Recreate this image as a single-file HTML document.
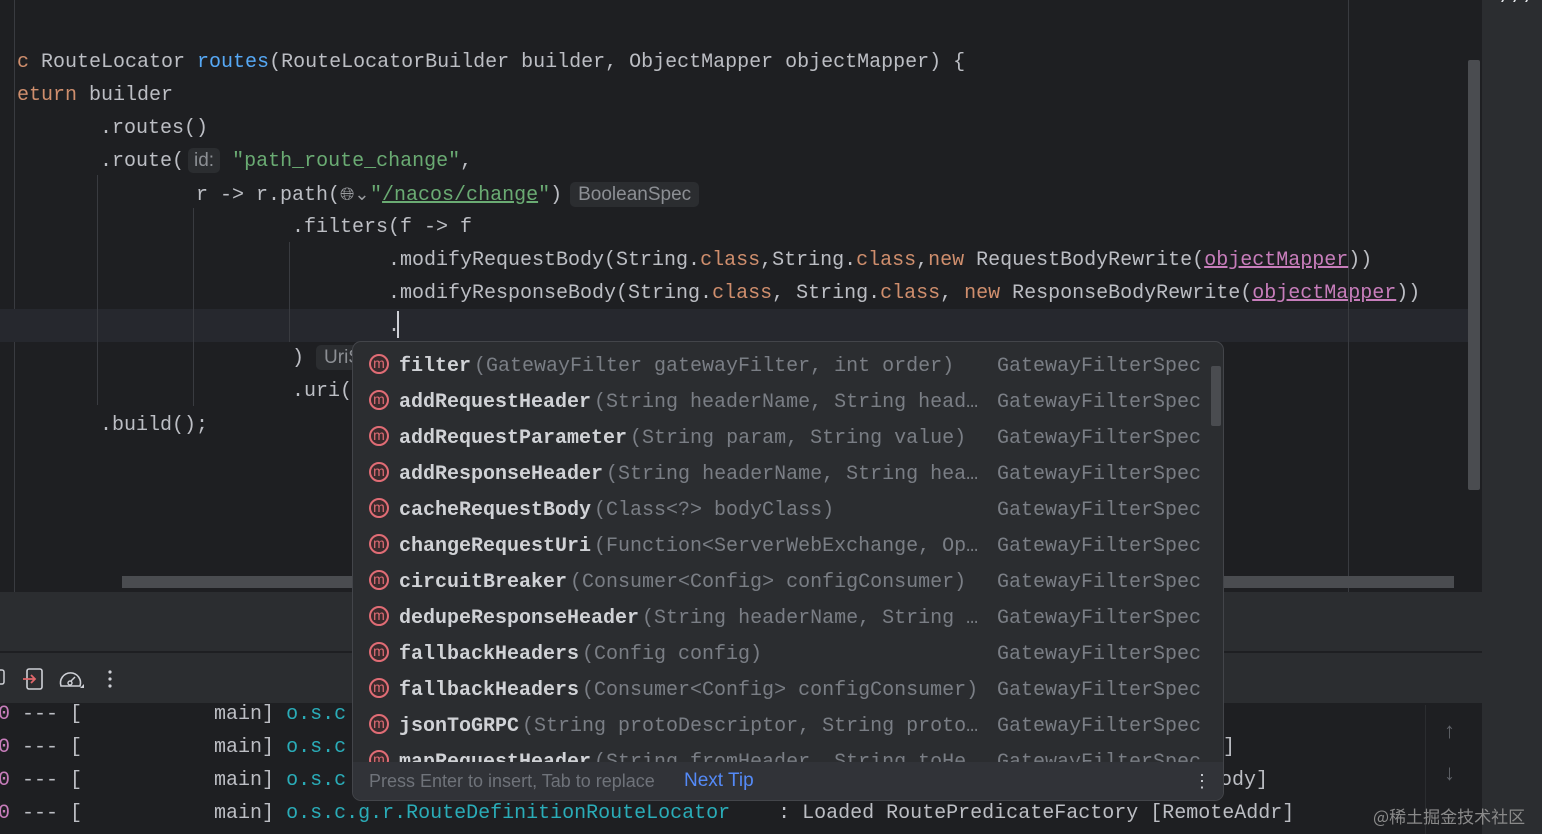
<!DOCTYPE html>
<html><head><meta charset="utf-8"><style>
*{margin:0;padding:0;box-sizing:border-box}
body{width:1542px;height:834px;overflow:hidden;background:#1e1f22;position:relative;font-family:"Liberation Mono",monospace;font-size:20px;color:#bcbec4}
.a{position:absolute;white-space:pre}
.ln{position:absolute;white-space:pre;height:33px;line-height:33px}
.k{color:#cf8e6d}.f{color:#56a8f5}.s{color:#6aab73}.p{color:#c77dbb}
.h{font-family:"Liberation Sans",sans-serif;font-size:19px;color:#8c8f94;background:#2b2d30;border-radius:5px;padding:2px 8px;line-height:25px}
.g{position:absolute;width:1px;background:#393b40}
.row{position:absolute;left:16px;height:36px;line-height:36px;white-space:pre;width:840px}
.ic{display:inline-block;width:20px;height:20px;border:2px solid #e06c75;border-radius:50%;color:#e06c75;font-family:"Liberation Sans",sans-serif;font-size:14px;line-height:15px;text-align:center;vertical-align:middle;margin-right:10px;margin-top:-4px;background:#3a2a2c}
.nm{font-weight:bold;color:#d0d2d6;margin-right:3px}
.pa{color:#7a7e85}
.rt{position:absolute;left:628px;color:#7a7e85}
</style></head><body>
<div class="a" style="left:14px;top:0;width:1px;height:592px;background:#393b40"></div>
<div class="a" style="left:0;top:309px;width:1470px;height:33px;background:#26282e"></div>
<div class="a" style="left:1348px;top:0;width:1px;height:592px;background:#393b40"></div>
<div class="a" style="left:1468px;top:60px;width:12px;height:430px;background:#4a4c50;border-radius:2px"></div>
<div class="a" style="left:1482px;top:0;width:60px;height:834px;background:#2b2d30"></div>
<div class="a" style="left:1500px;top:-14px;color:#dfe1e5;font-size:20px">///</div>
<div class="g" style="left:97px;top:175px;height:230px"></div>
<div class="g" style="left:193px;top:208px;height:198px"></div>
<div class="g" style="left:289px;top:242px;height:100px"></div>

<div class="ln" style="left:17px;top:46px"><span class="k">c</span> RouteLocator <span class="f">routes</span>(RouteLocatorBuilder builder, ObjectMapper objectMapper) {</div>
<div class="ln" style="left:17px;top:79px"><span class="k">eturn</span> builder</div>
<div class="ln" style="left:100px;top:112px">.routes()</div>
<div class="ln" style="left:100px;top:145px">.route(<span class="h" style="margin-left:4px;padding:2px 6px">id:</span> <span class="s">"path_route_change"</span>,</div>
<div class="ln" style="left:196px;top:178px">r -&gt; r.path(<span style="display:inline-block;width:30px;color:#9a9ca0;font-family:'DejaVu Sans',sans-serif;font-size:18px">🌐︎⌄</span><span class="s">"<u>/nacos/change</u>"</span>)<span class="h" style="margin-left:8px">BooleanSpec</span></div>
<div class="ln" style="left:292px;top:211px">.filters(f -&gt; f</div>
<div class="ln" style="left:388px;top:244px">.modifyRequestBody(String.<span class="k">class</span>,String.<span class="k">class</span>,<span class="k">new</span> RequestBodyRewrite(<u class="p">objectMapper</u>))</div>
<div class="ln" style="left:388px;top:277px">.modifyResponseBody(String.<span class="k">class</span>, String.<span class="k">class</span>, <span class="k">new</span> ResponseBodyRewrite(<u class="p">objectMapper</u>))</div>
<div class="ln" style="left:388px;top:310px">.</div>
<div class="a" style="left:397px;top:311px;width:2px;height:27px;background:#ced0d6"></div>
<div class="ln" style="left:292px;top:342px">) <span class="h">UriSpec</span></div>
<div class="ln" style="left:292px;top:375px">.uri(</div>
<div class="ln" style="left:100px;top:409px">.build();</div>
<div class="a" style="left:122px;top:576px;width:1332px;height:12px;background:#4a4c50"></div>

<div class="a" style="left:0;top:592px;width:1482px;height:60px;background:#2b2d30;border-bottom:1px solid #1e1f22"></div>
<div class="a" style="left:0;top:653px;width:1482px;height:50px;background:#2b2d30"></div>
<svg class="a" style="left:0;top:664px" width="130" height="32" viewBox="0 0 130 32">
<rect x="-6" y="6" width="10" height="14" rx="2" fill="none" stroke="#ced0d6" stroke-width="1.5"/>
<rect x="27" y="5" width="15" height="20" rx="2" fill="none" stroke="#ced0d6" stroke-width="1.6"/>
<path d="M23 15h12M31 11l4 4-4 4" fill="none" stroke="#e0676b" stroke-width="1.8"/>
<path d="M61 22a10 10 0 1 1 19 0z" fill="none" stroke="#ced0d6" stroke-width="1.6"/>
<circle cx="70" cy="19" r="2" fill="none" stroke="#ced0d6" stroke-width="1.4"/>
<path d="M71 17l4-4" stroke="#ced0d6" stroke-width="1.5"/>
<path d="M84 24l-4 0 4-4z" fill="#ced0d6"/>
<circle cx="110" cy="8" r="1.6" fill="#ced0d6"/><circle cx="110" cy="15" r="1.6" fill="#ced0d6"/><circle cx="110" cy="22" r="1.6" fill="#ced0d6"/>
</svg>
<div class="a" style="left:1425px;top:705px;width:57px;height:129px;background:#1e1f22;border-left:1px solid #2b2d30"></div>
<div class="a" style="left:1444px;top:718px;color:#5f6268;font-family:'Liberation Sans',sans-serif;font-size:22px">↑</div>
<div class="a" style="left:1444px;top:760px;color:#5f6268;font-family:'Liberation Sans',sans-serif;font-size:22px">↓</div>

<div class="ln" style="left:-2px;top:698px"><span class="p">0</span> --- [           main] <span style="color:#2aacb8">o.s.c</span></div>
<div class="ln" style="left:-2px;top:731px"><span class="p">0</span> --- [           main] <span style="color:#2aacb8">o.s.c</span></div>
<div class="ln" style="left:-2px;top:764px"><span class="p">0</span> --- [           main] <span style="color:#2aacb8">o.s.c</span></div>
<div class="ln" style="left:-2px;top:797px"><span class="p">0</span> --- [           main] <span style="color:#2aacb8">o.s.c.g.r.RouteDefinitionRouteLocator</span>    : Loaded RoutePredicateFactory [RemoteAddr]</div>
<div class="ln" style="left:1223px;top:731px">]</div>
<div class="ln" style="left:1220px;top:764px">ody]</div>
<div class="a" style="left:1373px;top:803px;color:#8a8a8a;font-family:'Noto Sans CJK SC',sans-serif;font-size:17px">@稀土掘金技术社区</div>

<div class="a" style="left:352px;top:341px;width:872px;height:460px;background:#2b2d30;border:1px solid #43454a;border-radius:9px;overflow:hidden">
 <div class="a" style="left:0;top:0;width:870px;height:420px;overflow:hidden">
  <div class="row" style="top:7px"><span class="ic">m</span><span class="nm">filter</span><span class="pa">(GatewayFilter gatewayFilter, int order)</span><span class="rt">GatewayFilterSpec</span></div>
  <div class="row" style="top:43px"><span class="ic">m</span><span class="nm">addRequestHeader</span><span class="pa">(String headerName, String head…</span><span class="rt">GatewayFilterSpec</span></div>
  <div class="row" style="top:79px"><span class="ic">m</span><span class="nm">addRequestParameter</span><span class="pa">(String param, String value)</span><span class="rt">GatewayFilterSpec</span></div>
  <div class="row" style="top:115px"><span class="ic">m</span><span class="nm">addResponseHeader</span><span class="pa">(String headerName, String hea…</span><span class="rt">GatewayFilterSpec</span></div>
  <div class="row" style="top:151px"><span class="ic">m</span><span class="nm">cacheRequestBody</span><span class="pa">(Class&lt;?&gt; bodyClass)</span><span class="rt">GatewayFilterSpec</span></div>
  <div class="row" style="top:187px"><span class="ic">m</span><span class="nm">changeRequestUri</span><span class="pa">(Function&lt;ServerWebExchange, Op…</span><span class="rt">GatewayFilterSpec</span></div>
  <div class="row" style="top:223px"><span class="ic">m</span><span class="nm">circuitBreaker</span><span class="pa">(Consumer&lt;Config&gt; configConsumer)</span><span class="rt">GatewayFilterSpec</span></div>
  <div class="row" style="top:259px"><span class="ic">m</span><span class="nm">dedupeResponseHeader</span><span class="pa">(String headerName, String …</span><span class="rt">GatewayFilterSpec</span></div>
  <div class="row" style="top:295px"><span class="ic">m</span><span class="nm">fallbackHeaders</span><span class="pa">(Config config)</span><span class="rt">GatewayFilterSpec</span></div>
  <div class="row" style="top:331px"><span class="ic">m</span><span class="nm">fallbackHeaders</span><span class="pa">(Consumer&lt;Config&gt; configConsumer)</span><span class="rt">GatewayFilterSpec</span></div>
  <div class="row" style="top:367px"><span class="ic">m</span><span class="nm">jsonToGRPC</span><span class="pa">(String protoDescriptor, String proto…</span><span class="rt">GatewayFilterSpec</span></div>
  <div class="row" style="top:403px"><span class="ic">m</span><span class="nm">mapRequestHeader</span><span class="pa">(String fromHeader, String toHe…</span><span class="rt">GatewayFilterSpec</span></div>
 </div>
 <div class="a" style="left:858px;top:24px;width:10px;height:60px;background:#4a4c50;border-radius:2px"></div>
 <div class="a" style="left:0;top:420px;width:870px;height:40px;background:#313338;font-family:'Liberation Sans',sans-serif;font-size:18px;line-height:38px;color:#6f737a;padding-left:16px">Press Enter to insert, Tab to replace<span style="position:absolute;left:331px;color:#548af7;font-size:19px">Next Tip</span><span style="position:absolute;left:840px;color:#ced0d6">⋮</span></div>
</div>
</body></html>
